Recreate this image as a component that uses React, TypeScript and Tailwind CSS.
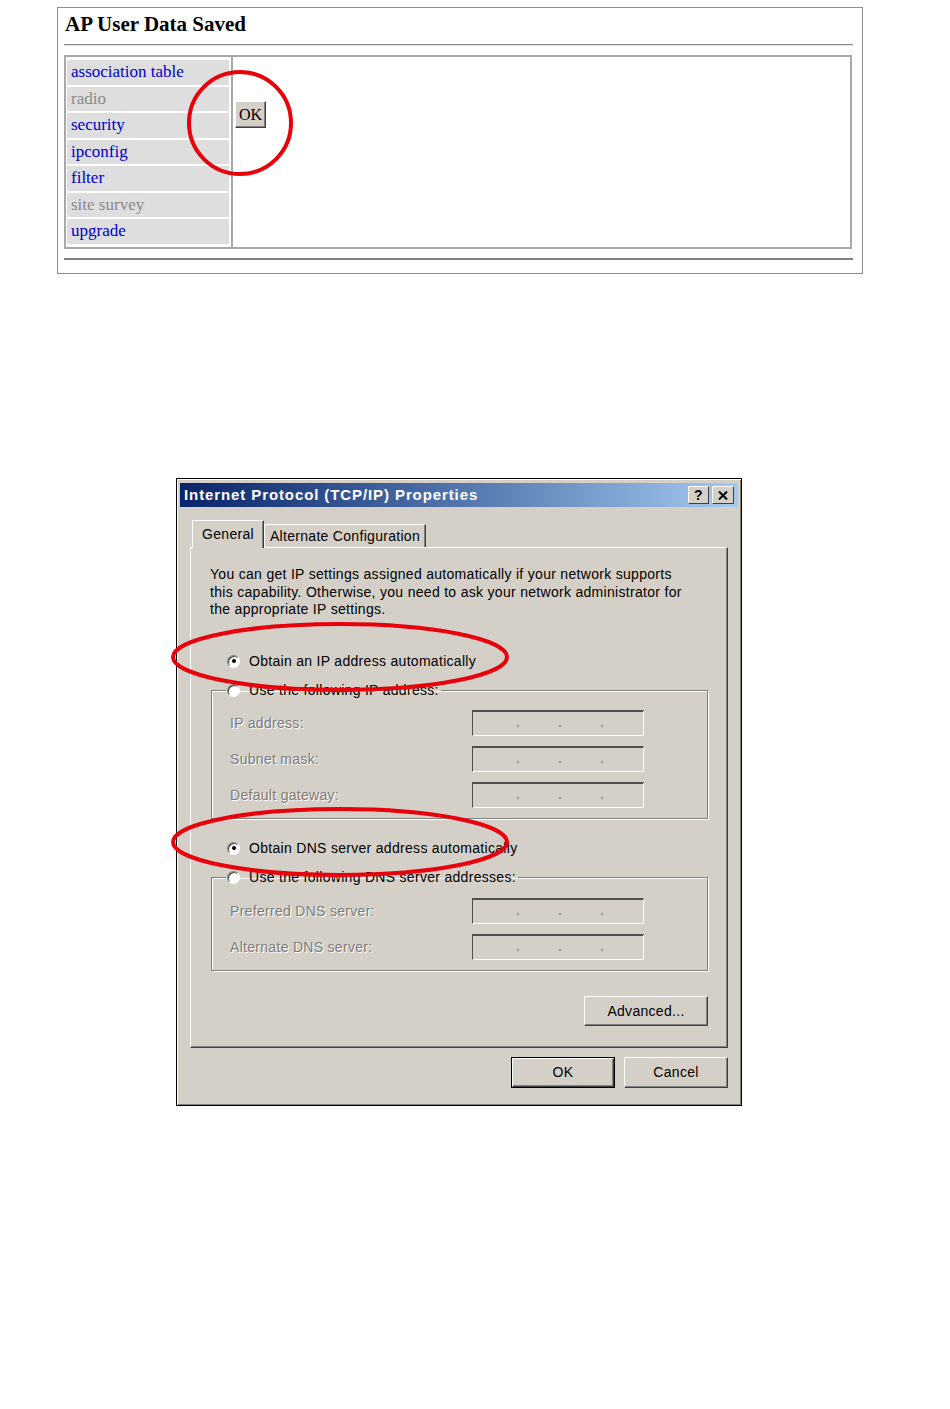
import React from "react";

const sans = "font-['Liberation_Sans',Arial,sans-serif]";
const serif = "font-['Liberation_Serif','Times_New_Roman',serif]";

const menu = [
  { label: "association table", active: true },
  { label: "radio", active: false },
  { label: "security", active: true },
  { label: "ipconfig", active: true },
  { label: "filter", active: true },
  { label: "site survey", active: false },
  { label: "upgrade", active: true },
];

function Radio({ checked }: { checked?: boolean }) {
  return (
    <span className="flex h-[13px] w-[13px] shrink-0 items-center justify-center rounded-full border border-t-[#808080] border-l-[#808080] border-b-white border-r-white bg-white shadow-[inset_1px_1px_0_#404040]">
      {checked && <span className="h-[4px] w-[4px] rounded-full bg-black" />}
    </span>
  );
}

function IpField() {
  return (
    <div className="flex h-[26px] w-[172px] items-end gap-[40px] border-t-2 border-l border-t-[#505050] border-l-[#505050] border-b border-r border-b-white border-r-white pb-[8px] pl-[44px]">
      <span className="h-[2px] w-[2px] bg-[#999]" />
      <span className="h-[2px] w-[2px] bg-[#999]" />
      <span className="h-[2px] w-[2px] bg-[#999]" />
    </div>
  );
}

function FieldRow({ label }: { label: string }) {
  return (
    <div className="flex h-[26px] items-center">
      <span className="w-[242px] text-[#7c7c7c] [text-shadow:1px_1px_0_#fff]">{label}</span>
      <IpField />
    </div>
  );
}

function GroupBox({ title, rows, top }: { title: string; rows: string[]; top: string }) {
  return (
    <fieldset className={`w-[497px] border border-[#808080] px-[18px] pb-[10px] shadow-[1px_1px_0_#fff,inset_1px_1px_0_#fff] ${top}`}>
      <legend className="-ml-[4px] pl-[1px] pr-[2px]">
        <span className="flex h-[18px] items-center gap-[9px]">
          <Radio />
          <span className="text-black">{title}</span>
        </span>
      </legend>
      <div className="flex flex-col gap-[10px]">
        {rows.map((r) => (
          <FieldRow key={r} label={r} />
        ))}
      </div>
    </fieldset>
  );
}

function WinButton({ children, isDefault }: { children: React.ReactNode; isDefault?: boolean }) {
  const face = (
    <div className="flex h-full w-full items-center justify-center border border-t-white border-l-white border-r-[#404040] border-b-[#404040] bg-[#d4d0c8] shadow-[inset_-1px_-1px_0_#808080] text-black">
      {children}
    </div>
  );
  if (isDefault) {
    return <div className="h-[31px] w-[104px] border border-black">{face}</div>;
  }
  return <div className="h-[31px] w-[104px]">{face}</div>;
}

export default function App() {
  return (
    <div className="relative h-[1409px] w-[950px] overflow-hidden bg-white">
      {/* AP page */}
      <div className="ml-[57px] mt-[7px] h-[267px] w-[806px] border border-[#8c8c8c] pl-[6px] pr-[9px]">
        <h1 className={`${serif} pt-[4px] pl-[1px] text-[21px] font-bold leading-[24px] text-black`}>
          AP User Data Saved
        </h1>
        <div className="mt-[8px] h-[2px] border-t border-b border-t-[#888] border-b-[#e4e4e4]" />
        <div className="mt-[9px] flex h-[194px] w-[788px] border-2 border-[#a8a8a8]">
          <div className="flex w-[164px] flex-col gap-[2px] pl-[1px] pt-[3px]">
            {menu.map((m) => (
              <div
                key={m.label}
                className={`${serif} h-[24.5px] w-[162px] bg-[#dedede] pl-[4px] text-[17px] leading-[24.5px] ${
                  m.active ? "text-[#0000cc]" : "text-[#8a8a8a]"
                }`}
              >
                {m.label}
              </div>
            ))}
          </div>
          <div className="ml-[1px] w-[2px] bg-[#a8a8a8]" />
          <div className="pl-[2px] pt-[44px]">
            <div
              className={`${serif} flex h-[27px] w-[31px] items-center justify-center border border-t-white border-l-white border-r-[#404040] border-b-[#404040] bg-[#d4d0c8] shadow-[inset_-1px_-1px_0_#808080] text-[16px] text-black`}
            >
              OK
            </div>
          </div>
        </div>
        <div className="mt-[9px] h-[2px] bg-[#808080]" />
      </div>

      {/* TCP/IP dialog */}
      <div
        className={`${sans} ml-[176px] mt-[204px] h-[628px] w-[566px] border border-black bg-[#d4d0c8] px-[3px] pt-[4px] text-[14px] tracking-[0.3px] shadow-[inset_1px_1px_0_#fff,inset_-1px_-1px_0_#808080]`}
      >
        <div className="flex h-[24px] items-center justify-between bg-gradient-to-r from-[#0a246a] to-[#a6caf0] pl-[4px] pr-[4px]">
          <span className="text-[15px] font-bold tracking-[0.9px] text-white">Internet Protocol (TCP/IP) Properties</span>
          <div className="flex gap-[3px]">
            <div className="flex h-[18px] w-[21px] items-center justify-center border border-t-white border-l-white border-r-[#404040] border-b-[#404040] bg-[#d4d0c8] text-[14px] font-bold leading-none text-black">
              ?
            </div>
            <div className="flex h-[18px] w-[22px] items-center justify-center border border-t-white border-l-white border-r-[#404040] border-b-[#404040] bg-[#d4d0c8]">
              <svg width="10" height="9" viewBox="0 0 10 9">
                <path d="M1 0.5 L9 8.5 M9 0.5 L1 8.5" stroke="#000" strokeWidth="2" />
              </svg>
            </div>
          </div>
        </div>

        <div className="mt-[13px] flex h-[27px] items-end pl-[12px]">
          <div className="relative z-10 -mb-px flex h-[28px] w-[72px] items-center justify-center border-l border-t border-r border-l-white border-t-white border-r-[#404040] bg-[#d4d0c8] shadow-[inset_-1px_0_0_#808080]">
            General
          </div>
          <div className="flex h-[23px] w-[162px] items-center justify-center border-l border-t border-r border-l-white border-t-white border-r-[#404040] shadow-[inset_-1px_0_0_#808080]">
            Alternate Configuration
          </div>
        </div>

        <div className="ml-[10px] h-[501px] w-[538px] border border-t-white border-l-white border-r-[#404040] border-b-[#404040] pl-[20px] pt-[18px] shadow-[inset_-1px_-1px_0_#808080]">
          <p className="-ml-px leading-[17.5px] text-black">
            You can get IP settings assigned automatically if your network supports
            <br />
            this capability. Otherwise, you need to ask your network administrator for
            <br />
            the appropriate IP settings.
          </p>

          <div className="mt-[33.5px] flex h-[18px] items-center gap-[9px] pl-[16px]">
            <Radio checked />
            <span className="text-black">Obtain an IP address automatically</span>
          </div>

          <GroupBox
            title="Use the following IP address:"
            rows={["IP address:", "Subnet mask:", "Default gateway:"]}
            top="mt-[11px] pt-[11px]"
          />

          <div className="mt-[20px] flex h-[18px] items-center gap-[9px] pl-[16px]">
            <Radio checked />
            <span className="text-black">Obtain DNS server address automatically</span>
          </div>

          <GroupBox
            title="Use the following DNS server addresses:"
            rows={["Preferred DNS server:", "Alternate DNS server:"]}
            top="mt-[11px] pt-[12px]"
          />

          <div className="mt-[25px] flex w-[497px] justify-end">
            <div className="flex h-[30px] w-[124px] items-center justify-center border border-t-white border-l-white border-r-[#404040] border-b-[#404040] shadow-[inset_-1px_-1px_0_#808080] text-black">
              Advanced...
            </div>
          </div>
        </div>

        <div className="ml-[10px] mt-[9px] flex w-[538px] justify-end gap-[9px]">
          <WinButton isDefault>OK</WinButton>
          <WinButton>Cancel</WinButton>
        </div>
      </div>

      {/* red annotation marks */}
      <svg className="pointer-events-none absolute left-0 top-0" width="950" height="1409">
        <circle cx="240" cy="123" r="51" fill="none" stroke="#e8000b" strokeWidth="4" />
        <ellipse cx="340" cy="657" rx="167" ry="33" fill="none" stroke="#e8000b" strokeWidth="4" />
        <ellipse cx="340" cy="842" rx="167" ry="33" fill="none" stroke="#e8000b" strokeWidth="4" />
      </svg>
    </div>
  );
}
